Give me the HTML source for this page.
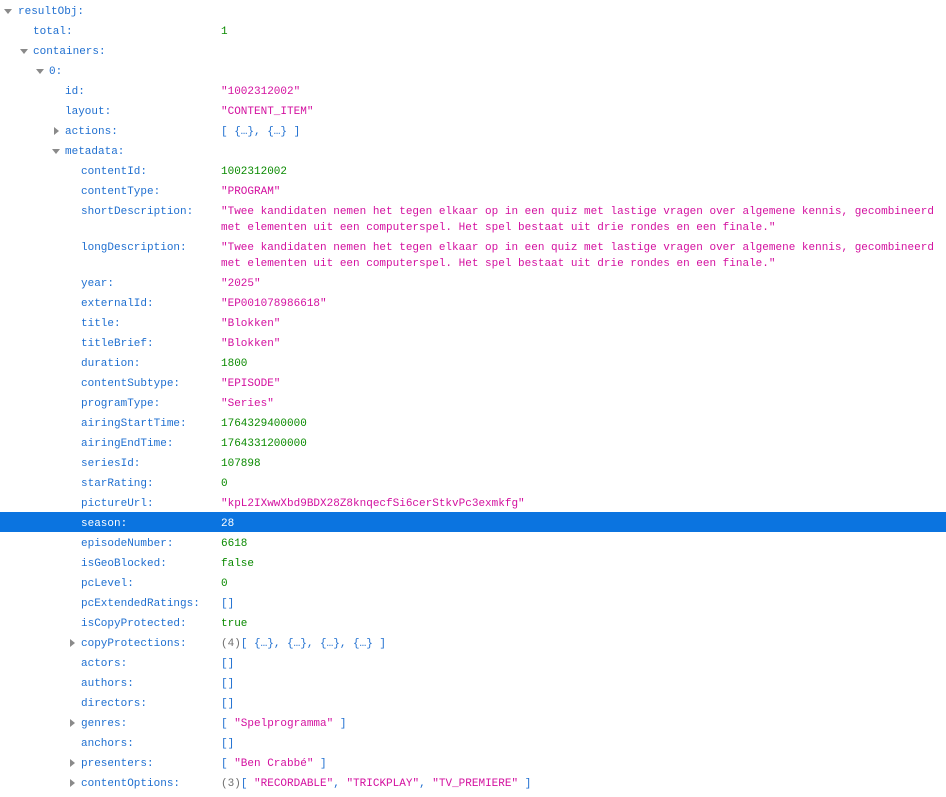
<!DOCTYPE html>
<html><head><meta charset="utf-8"><style>
body{margin:0;background:#fff;font-family:"Liberation Mono",monospace;font-size:11px;width:946px;height:797px;overflow:hidden}
.r{position:relative;height:20px;line-height:20px;white-space:nowrap}
.r.t{height:36px;line-height:16px}
.k{position:absolute;top:2px;color:#1f6fd0}
.v{position:absolute;left:221px;top:2px;right:8px;white-space:normal}
.r.t .k,.r.t .v{top:4px}
.s{color:#d3109f}.n{color:#0a8a00}.b{color:#1f6fd0}.g{color:#6f6f6f}
.a{position:absolute;top:9px;width:0;height:0}
.dn{border-left:4px solid transparent;border-right:4px solid transparent;border-top:5px solid #8a8a8a}
.rt{top:7px;border-top:4px solid transparent;border-bottom:4px solid transparent;border-left:5px solid #8a8a8a}
.sel{background:#0b74e0}.sel .k,.sel .v{color:#fff}
</style></head><body>
<div class="r"><i class="a dn" style="left:4px"></i><span class="k" style="left:18px">resultObj:</span></div>
<div class="r"><span class="k" style="left:33px">total:</span><span class="v n">1</span></div>
<div class="r"><i class="a dn" style="left:20px"></i><span class="k" style="left:33px">containers:</span></div>
<div class="r"><i class="a dn" style="left:36px"></i><span class="k" style="left:49px">0:</span></div>
<div class="r"><span class="k" style="left:65px">id:</span><span class="v s">"1002312002"</span></div>
<div class="r"><span class="k" style="left:65px">layout:</span><span class="v s">"CONTENT_ITEM"</span></div>
<div class="r"><i class="a rt" style="left:54px"></i><span class="k" style="left:65px">actions:</span><span class="v b">[ {…}, {…} ]</span></div>
<div class="r"><i class="a dn" style="left:52px"></i><span class="k" style="left:65px">metadata:</span></div>
<div class="r"><span class="k" style="left:81px">contentId:</span><span class="v n">1002312002</span></div>
<div class="r"><span class="k" style="left:81px">contentType:</span><span class="v s">"PROGRAM"</span></div>
<div class="r t"><span class="k" style="left:81px">shortDescription:</span><span class="v s">"Twee kandidaten nemen het tegen elkaar op in een quiz met lastige vragen over algemene kennis, gecombineerd met elementen uit een computerspel. Het spel bestaat uit drie rondes en een finale."</span></div>
<div class="r t"><span class="k" style="left:81px">longDescription:</span><span class="v s">"Twee kandidaten nemen het tegen elkaar op in een quiz met lastige vragen over algemene kennis, gecombineerd met elementen uit een computerspel. Het spel bestaat uit drie rondes en een finale."</span></div>
<div class="r"><span class="k" style="left:81px">year:</span><span class="v s">"2025"</span></div>
<div class="r"><span class="k" style="left:81px">externalId:</span><span class="v s">"EP001078986618"</span></div>
<div class="r"><span class="k" style="left:81px">title:</span><span class="v s">"Blokken"</span></div>
<div class="r"><span class="k" style="left:81px">titleBrief:</span><span class="v s">"Blokken"</span></div>
<div class="r"><span class="k" style="left:81px">duration:</span><span class="v n">1800</span></div>
<div class="r"><span class="k" style="left:81px">contentSubtype:</span><span class="v s">"EPISODE"</span></div>
<div class="r"><span class="k" style="left:81px">programType:</span><span class="v s">"Series"</span></div>
<div class="r"><span class="k" style="left:81px">airingStartTime:</span><span class="v n">1764329400000</span></div>
<div class="r"><span class="k" style="left:81px">airingEndTime:</span><span class="v n">1764331200000</span></div>
<div class="r"><span class="k" style="left:81px">seriesId:</span><span class="v n">107898</span></div>
<div class="r"><span class="k" style="left:81px">starRating:</span><span class="v n">0</span></div>
<div class="r"><span class="k" style="left:81px">pictureUrl:</span><span class="v s">"kpL2IXwwXbd9BDX28Z8knqecfSi6cerStkvPc3exmkfg"</span></div>
<div class="r sel"><span class="k" style="left:81px">season:</span><span class="v">28</span></div>
<div class="r"><span class="k" style="left:81px">episodeNumber:</span><span class="v n">6618</span></div>
<div class="r"><span class="k" style="left:81px">isGeoBlocked:</span><span class="v n">false</span></div>
<div class="r"><span class="k" style="left:81px">pcLevel:</span><span class="v n">0</span></div>
<div class="r"><span class="k" style="left:81px">pcExtendedRatings:</span><span class="v b">[]</span></div>
<div class="r"><span class="k" style="left:81px">isCopyProtected:</span><span class="v n">true</span></div>
<div class="r"><i class="a rt" style="left:70px"></i><span class="k" style="left:81px">copyProtections:</span><span class="v b"><span class="g">(4)</span>[ {…}, {…}, {…}, {…} ]</span></div>
<div class="r"><span class="k" style="left:81px">actors:</span><span class="v b">[]</span></div>
<div class="r"><span class="k" style="left:81px">authors:</span><span class="v b">[]</span></div>
<div class="r"><span class="k" style="left:81px">directors:</span><span class="v b">[]</span></div>
<div class="r"><i class="a rt" style="left:70px"></i><span class="k" style="left:81px">genres:</span><span class="v b">[ <span class="s">"Spelprogramma"</span> ]</span></div>
<div class="r"><span class="k" style="left:81px">anchors:</span><span class="v b">[]</span></div>
<div class="r"><i class="a rt" style="left:70px"></i><span class="k" style="left:81px">presenters:</span><span class="v b">[ <span class="s">"Ben Crabbé"</span> ]</span></div>
<div class="r"><i class="a rt" style="left:70px"></i><span class="k" style="left:81px">contentOptions:</span><span class="v b"><span class="g">(3)</span>[ <span class="s">"RECORDABLE"</span>, <span class="s">"TRICKPLAY"</span>, <span class="s">"TV_PREMIERE"</span> ]</span></div>
</body></html>
